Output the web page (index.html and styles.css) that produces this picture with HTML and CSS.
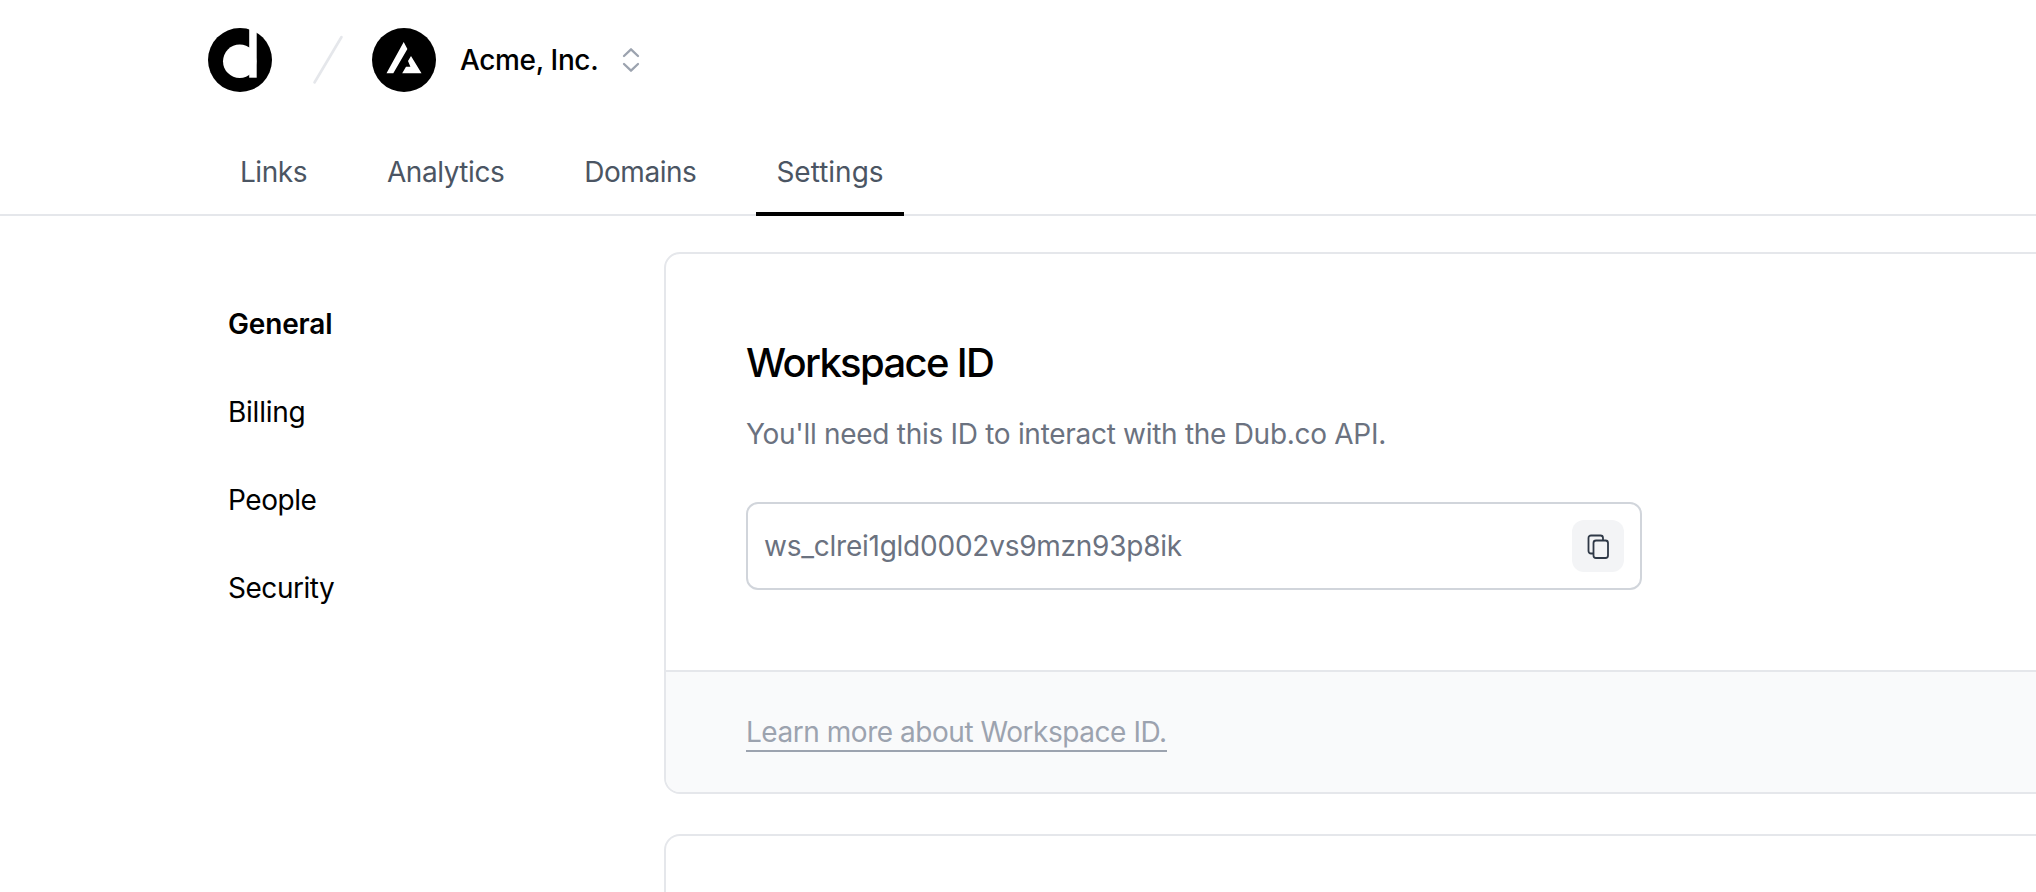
FILE: index.html
```
<!DOCTYPE html>
<html lang="en">
<head>
<meta charset="utf-8">
<title>Workspace settings</title>
<link rel="stylesheet" href="styles.css">
</head>
<body>
<header class="header">
  <div class="brand">
    <svg class="logo" viewBox="0 0 64 64"><circle cx="32" cy="32" r="32"/><circle cx="31.7" cy="33.3" r="16.7" fill="#fff"/><path d="M41.2 0H48.7V49.7H41.2Z" fill="#fff"/></svg>
    <svg class="slash" viewBox="0 0 32 52"><path d="M29.5 3 2.5 48.500" fill="none" stroke="#e5e7eb" stroke-width="2.600" stroke-linecap="round"/></svg>
    <svg class="avatar" viewBox="0 0 64 64"><circle cx="32" cy="32" r="32"/><path d="M31.700 14 35.400 21 21.300 45.200H14.500ZM39 28 49.500 45.200H30.200L34 38.700H38.400L36 33Z" fill="#fff"/></svg>
    <span class="workspace">Acme, Inc.</span>
    <svg class="chevrons" viewBox="0 0 18 26"><path d="M2 9 9 2.300 16 9M2 17 9 23.700 16 17" fill="none" stroke="#9ca3af" stroke-width="2.300" stroke-linecap="round" stroke-linejoin="round"/></svg>
  </div>
  <nav class="tabs">
    <a class="tab snug">Links</a>
    <a class="tab snug">Analytics</a>
    <a class="tab snug">Domains</a>
    <a class="tab active">Settings</a>
  </nav>
</header>
<main class="page">
  <nav class="side">
    <a class="side-link current">General</a>
    <a class="side-link close">Billing</a>
    <a class="side-link snug">People</a>
    <a class="side-link snug">Security</a>
  </nav>
  <div class="cards">
    <section class="card">
      <div class="card-body">
        <h2 class="title">Workspace ID</h2>
        <p class="desc">You'll need this ID to interact with the Dub.co API.</p>
        <div class="field">
          <span class="value">ws_clrei1gld0002vs9mzn93p8ik</span>
          <button class="copy" aria-label="Copy">
            <svg class="copy-icon" viewBox="0 0 24 26" fill="none" stroke="#2f3947" stroke-width="1.800"><rect x="7.500" y="7.500" width="14.500" height="17.500" rx="2.500"/><path d="M7.500 20.500H5A2.500 2.500 0 0 1 2.500 18V5A2.500 2.500 0 0 1 5 2.500H14.500A2.500 2.500 0 0 1 17 5V7.500"/></svg>
          </button>
        </div>
      </div>
      <div class="card-foot"><a class="learn snug">Learn more about Workspace ID.</a></div>
    </section>
    <section class="card next"></section>
  </div>
</main>
</body>
</html>
```
FILE: styles.css
```
* { box-sizing: border-box; }
body {
  margin: 0;
  height: 892px;
  overflow: hidden;
  background: #fff;
  color: #000;
  font: 400 28px/40px Inter, sans-serif;
}
.header {
  height: 216px;
  border-bottom: 2px solid #e5e7eb;
}
.brand {
  display: flex;
  align-items: center;
  height: 120px;
  padding-left: 208px;
}
.snug { letter-spacing: -0.46px; }
.close { letter-spacing: -0.25px; }
.logo, .avatar { width: 64px; height: 64px; }
.slash { width: 32px; height: 52px; margin: 0 28px 0 40px; }
.workspace { margin-left: 24px; width: 139px; font-weight: 500; letter-spacing: -0.36px; white-space: nowrap; }
.chevrons { width: 18px; height: 26px; margin-left: 23px; }
.tabs {
  display: flex;
  gap: 40px;
  height: 96px;
  padding-left: 220px;
}
.tab {
  padding: 32px 20px 20px;
  height: 96px;
  color: #4b5563;
  border-bottom: 4px solid transparent;
}
.tab.active { border-color: #000; }
.page { display: flex; padding-top: 36px; }
.side {
  flex: none;
  display: flex;
  flex-direction: column;
  gap: 48px;
  width: 664px;
  padding: 52px 0 0 228px;
}
.current { font-weight: 600; letter-spacing: -0.15px; }
.cards {
  flex: none;
  display: flex;
  flex-direction: column;
  gap: 40px;
  width: 1440px;
}
.card {
  overflow: hidden;
  border: 2px solid #e5e7eb;
  border-radius: 16px;
}
.next { height: 58px; border-bottom: 0; border-radius: 16px 16px 0 0; }
.card-body { padding: 80px; }
.title { margin: 0 0 23px; padding-top: 1px; font-size: 40px; line-height: 56px; font-weight: 500; letter-spacing: -1.65px; }
.desc { margin: 0 0 48px; color: #6b7280; letter-spacing: -0.29px; }
.field {
  display: flex;
  align-items: center;
  justify-content: space-between;
  width: 896px;
  height: 88px;
  padding: 0 16px;
  border: 2px solid #d1d5db;
  border-radius: 12px;
  color: #6b7280;
  letter-spacing: -0.24px;
}
.copy {
  display: flex;
  align-items: center;
  justify-content: center;
  width: 52px;
  height: 52px;
  padding: 0;
  border: 0;
  border-radius: 12px;
  background: #f3f4f6;
}
.copy-icon { width: 24px; height: 26px; }
.card-foot {
  display: flex;
  align-items: center;
  height: 122px;
  padding: 0 80px;
  border-top: 2px solid #e5e7eb;
  background: #f9fafb;
}
.learn { height: 40px; border-bottom: 2px solid #9ca3af; color: #9ca3af; }
```
